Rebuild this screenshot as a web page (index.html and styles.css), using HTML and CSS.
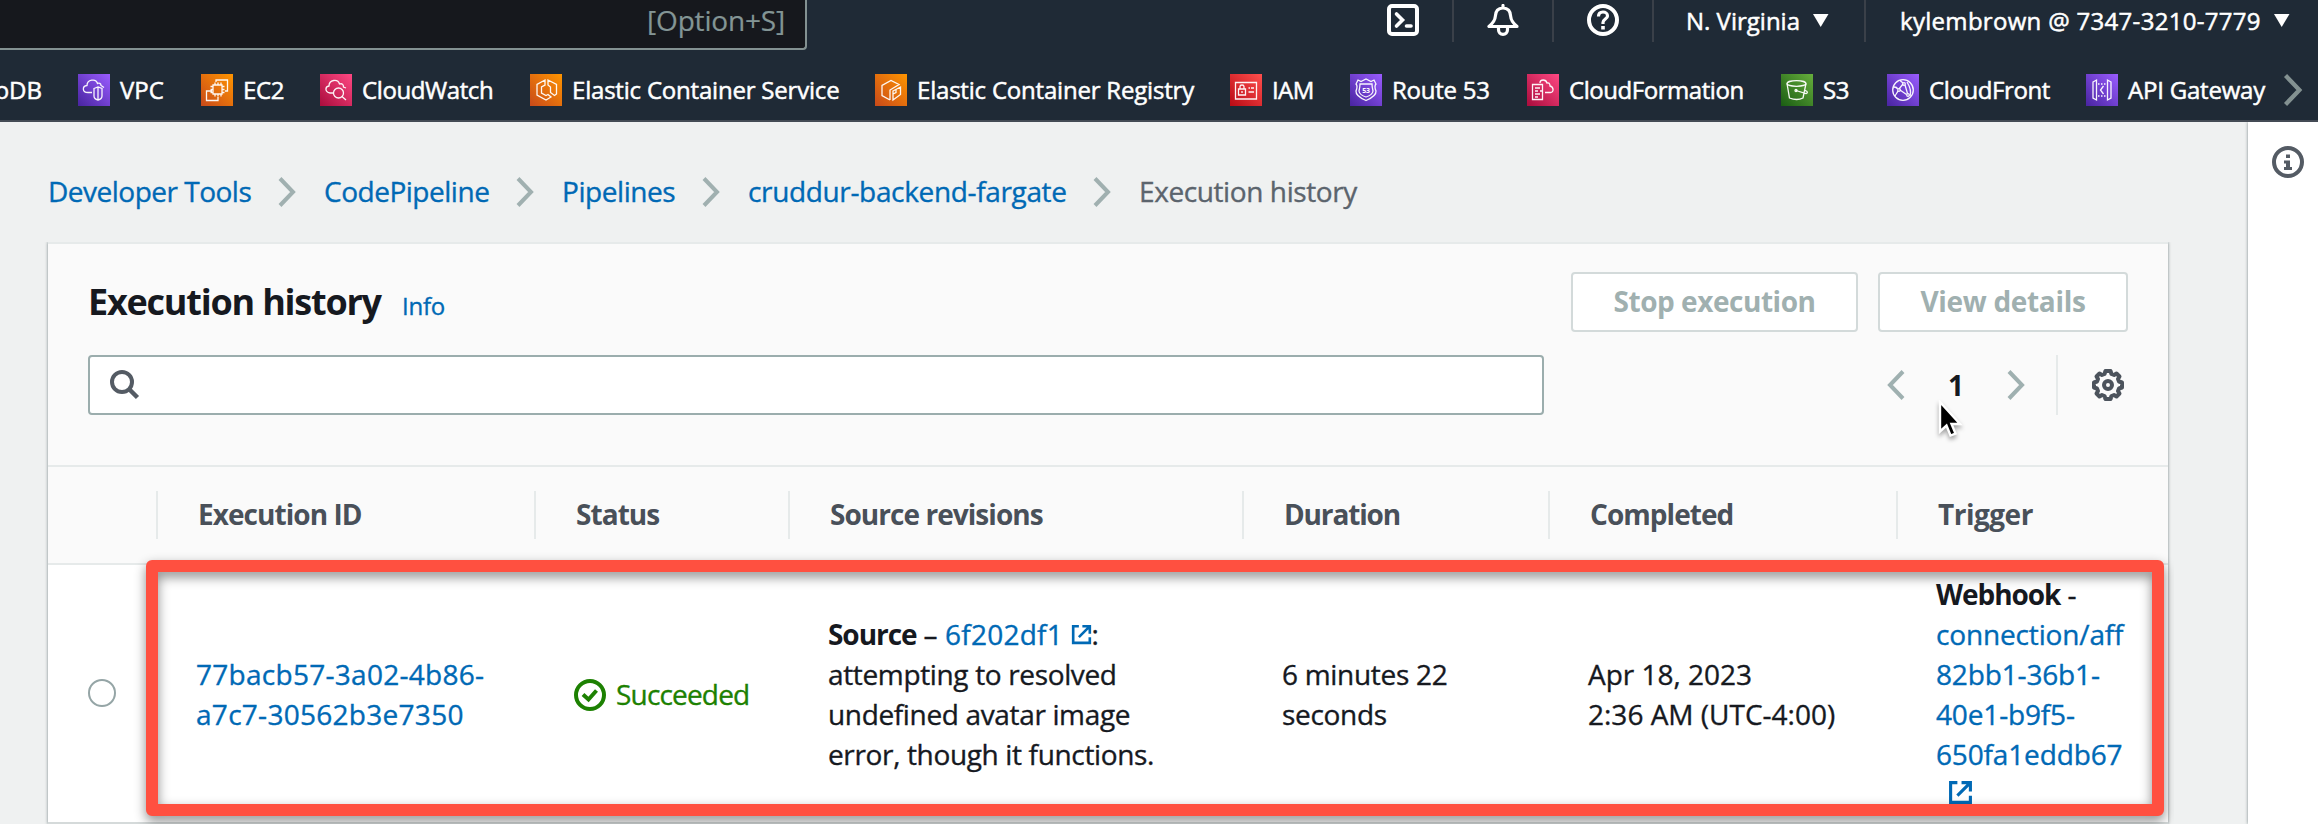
FILE: index.html
```html
<!DOCTYPE html>
<html lang="en">
<head>
<meta charset="utf-8">
<title>Execution history</title>
<link rel="stylesheet" href="styles.css">
</head>
<body>
<svg class="defs" width="0" height="0">
  <defs>
    <linearGradient id="purple" x1="0" y1="1" x2="1" y2="0"><stop offset="0" stop-color="#4824a0"/><stop offset="1" stop-color="#9a5cff"/></linearGradient>
    <linearGradient id="orange" x1="0" y1="1" x2="1" y2="0"><stop offset="0" stop-color="#c8491a"/><stop offset="1" stop-color="#ff9500"/></linearGradient>
    <linearGradient id="pink" x1="0" y1="1" x2="1" y2="0"><stop offset="0" stop-color="#a90c3c"/><stop offset="1" stop-color="#ff4883"/></linearGradient>
    <linearGradient id="red" x1="0" y1="1" x2="1" y2="0"><stop offset="0" stop-color="#b90a14"/><stop offset="1" stop-color="#ff4f4d"/></linearGradient>
    <linearGradient id="green" x1="0" y1="1" x2="1" y2="0"><stop offset="0" stop-color="#1a5c13"/><stop offset="1" stop-color="#66ae3c"/></linearGradient>
    <symbol id="chevron" viewBox="0 0 18 30"><path d="M2 1.500 15 15 2 28.500" fill="none" stroke="currentColor" stroke-width="4"/></symbol>
    <symbol id="external" viewBox="0 0 24 24"><path d="M9 2.500H2.500V21.500H21.500V15M13 2.500H21.500V11M21 3 9 15" fill="none" stroke="currentColor" stroke-width="3"/></symbol>
  </defs>
</svg>
<header class="nav">
  <div class="topbar">
    <div class="search-box"><span>[Option+S]</span></div>
    <div class="tool"><svg width="32" height="32" viewBox="0 0 32 32"><rect x="2" y="2" width="28" height="28" rx="3" fill="none" stroke="#fff" stroke-width="4"/><path d="M9.500 10 15.500 16 9.500 22" fill="none" stroke="#fff" stroke-width="3.600" stroke-linecap="round"/><path d="M19.500 22H24" stroke="#fff" stroke-width="3.600" stroke-linecap="round"/></svg></div>
    <div class="tool"><svg width="32" height="32" viewBox="0 0 32 32" fill="none" stroke="#fff" stroke-width="3.200" stroke-linejoin="round" stroke-linecap="round"><path d="M16 1.500V4M16 4C10.500 4 8.500 8 8.300 12.500 8.100 16.500 6 19 2 22.500H30C26 19 23.900 16.500 23.700 12.500 23.500 8 21.500 4 16 4Z"/><path d="M11.500 23V25.500C11.500 28.500 13.500 30.300 16 30.300S20.500 28.500 20.500 25.500V23"/></svg></div>
    <div class="tool"><svg width="32" height="32" viewBox="0 0 32 32" fill="none" stroke="#fff"><circle cx="16" cy="16" r="14" stroke-width="4"/><path d="M11.500 12.500C11.500 9.500 13.500 8 16 8S20.500 9.600 20.500 12C20.500 15 16 15.200 16 18.500V20" stroke-width="3.200"/><path d="M16 22V25.500" stroke-width="3.600"/></svg></div>
    <div class="menu region"><span>N. Virginia</span><svg width="16" height="13"><path d="M0 0H15.500L7.700 13Z" fill="#fff"/></svg></div>
    <div class="menu account"><span>kylembrown @ 7347-3210-7779</span><svg width="16" height="13"><path d="M0 0H15.500L7.700 13Z" fill="#fff"/></svg></div>
  </div>
  <nav class="favorites">
    <div class="fav cut"><span>oDB</span></div>
    <div class="fav f1"><svg viewBox="0 0 32 32"><path d="M0 0H32V32H0Z" fill="url(#purple)"/><path d="M14 18.500H10C4 18.500 4 12 9 11.500 9 5.500 18 4 19.500 9.500 21 8.500 23 9.500 23 11.500L26 13.500M16 14.500 20 13 24 14.500V22Q24 25 20 26 16 25 16 22ZM20 13V26"/></svg><span>VPC</span></div>
    <div class="fav f2"><svg viewBox="0 0 32 32"><path d="M0 0H32V32H0Z" fill="url(#orange)"/><path d="M12 11H21V20H12ZM14 8.500V11M17 8.500V11M20 8.500V11M14 20V22.500M17 20V22.500M20 20V22.500M9.500 12.500H12M9.500 15.500H12M9.500 18.500H12M21 12.500H23.500M21 15.500H23.500M21 18.500H23.500M15 8V6H26.500V17H24M11 17H5.500V26.500H17V23"/></svg><span>EC2</span></div>
    <div class="fav f3"><svg viewBox="0 0 32 32"><path d="M0 0H32V32H0Z" fill="url(#pink)"/><path d="M13 19H10C4.500 18 5 12.500 9 12 9 5.500 18 4.500 19.500 10 22.500 9 23.500 11 23.500 13L26 14M22 22.500 26 26"/><circle cx="18.500" cy="19" r="5"/></svg><span>CloudWatch</span></div>
    <div class="fav f4"><svg viewBox="0 0 32 32"><path d="M0 0H32V32H0Z" fill="url(#orange)"/><path d="M15 6 7 10.500V21L16 26 21 23 18 20.500 16 21.500 11.500 19V13L15 11ZM18 6 26.500 10.500V20L24.500 21.500 20.500 18.500V13L18 11Z"/></svg><span>Elastic Container Service</span></div>
    <div class="fav f5"><svg viewBox="0 0 32 32"><path d="M0 0H32V32H0Z" fill="url(#orange)"/><path d="M15 26 7 21.500V11.500L16 6.500 24 10.500 15 16V26M18 17 25.500 13V20.500L18 26ZM18 17V26M21 15.500V18.500L18 20"/></svg><span>Elastic Container Registry</span></div>
    <div class="fav f6"><svg viewBox="0 0 32 32"><path d="M0 0H32V32H0Z" fill="url(#red)"/><path d="M5.500 8.500H26.500V25H5.500ZM8.500 15H15.500V21H8.500ZM10 15V12.500Q10 11 12 11T14 12.500V15M18.500 14H20M21 14H24M18.500 18H24M12 17V19"/></svg><span>IAM</span></div>
    <div class="fav f7"><svg viewBox="0 0 32 32"><path d="M0 0H32V32H0Z" fill="url(#purple)"/><path d="M8 6 11 7.500 16 5 21 7.500 24 6 26 10Q24 12 26 17 26.500 22 16 26.500 5.500 22 6 17 8 12 6 10ZM10 10H22Q22 13 23 17 22.500 21 16 23 9.500 21 9 17 10 13 10 10Z"/><text x="16" y="19" text-anchor="middle">53</text></svg><span>Route 53</span></div>
    <div class="fav f8"><svg viewBox="0 0 32 32"><path d="M0 0H32V32H0Z" fill="url(#pink)"/><path d="M5.500 10.500H15.500V25.500H5.500ZM8 14H13M8 17H11M13 17H15M8 20H13M8 23H11M13 9C13 5 19 5 20 9 23 8.500 23 11 23 12 27 13 27 18.500 23.500 18.500H18"/></svg><span>CloudFormation</span></div>
    <div class="fav f9"><svg viewBox="0 0 32 32"><path d="M0 0H32V32H0Z" fill="url(#green)"/><path d="M6 9.500 8.500 24Q16 27 22 24L25 9.500M15 16.500 25 19.500Q27 19 26 17.500L23.500 16"/><ellipse cx="15.500" cy="9.500" rx="9.500" ry="2.800"/><circle cx="15" cy="16.500" r="1"/></svg><span>S3</span></div>
    <div class="fav f10"><svg viewBox="0 0 32 32"><path d="M0 0H32V32H0Z" fill="url(#purple)"/><circle cx="16" cy="16" r="10.300"/><path d="M8 22C9 20 10 19 11 17M12 15 16 10M18 11 20.500 19.500M13 16 19.500 20.500M13 6.500 16 9M23 22Q25 16 20 8M7 13Q10 13 10.500 15"/><circle cx="17" cy="10" r="1.300"/><circle cx="12" cy="16" r="1.300"/><circle cx="21" cy="21" r="1.300"/></svg><span>CloudFront</span></div>
    <div class="fav f11"><svg viewBox="0 0 32 32"><path d="M0 0H32V32H0Z" fill="url(#purple)"/><path d="M7 8 10.500 6V26L7 24ZM25 8 21.500 6V26L25 24ZM17.500 12 14.500 16 17.500 20"/><path d="M12 10H21M12 22H21" stroke-dasharray="1.500 1.500"/></svg><span>API Gateway</span></div>
    <svg class="next" width="20" height="32" viewBox="0 0 18 30"><use href="#chevron"/></svg>
  </nav>
</header>
<div class="page">
  <main class="main">
    <nav class="breadcrumb">
      <a class="b1">Developer Tools</a><svg><use href="#chevron"/></svg>
      <a class="b2">CodePipeline</a><svg><use href="#chevron"/></svg>
      <a class="b3">Pipelines</a><svg><use href="#chevron"/></svg>
      <a class="b4">cruddur-backend-fargate</a><svg><use href="#chevron"/></svg>
      <span>Execution history</span>
    </nav>
    <section class="card">
      <div class="card-head">
        <div class="title-row">
          <h1>Execution history</h1><a class="info">Info</a>
          <div class="buttons"><button class="stop" disabled>Stop execution</button><button class="view" disabled>View details</button></div>
        </div>
        <div class="filter-row">
          <div class="filter"><svg width="30" height="30" viewBox="0 0 30 30" fill="none" stroke="#545b64"><circle cx="12" cy="12" r="10" stroke-width="4"/><path d="M19 19 27.500 27.500" stroke-width="4.500"/></svg></div>
          <div class="pager">
            <svg class="prev" width="18" height="30"><use href="#chevron"/></svg>
            <b>1</b>
            <svg width="18" height="30"><use href="#chevron"/></svg>
          </div>
          <div class="settings"><svg width="32" height="32" viewBox="0 0 32 32" fill="none" stroke="#4c535c" stroke-width="4" stroke-linejoin="round"><path d="M13.500 2H18.500L19.500 5 22 6 24.500 4.500 27.500 7.500 26 10 27 12.500 30 13.500V18.500L27 19.500 26 22 27.500 24.500 24.500 27.500 22 26 19.500 27 18.500 30H13.500L12.500 27 10 26 7.500 27.500 4.500 24.500 6 22 5 19.500 2 18.500V13.500L5 12.500 6 10 4.500 7.500 7.500 4.500 10 6 12.500 5Z"/><circle cx="16" cy="16" r="4"/></svg></div>
          <svg class="cursor" width="34" height="46" viewBox="0 0 34 46"><path d="M3 2V31.500L9.500 25.500 13.500 35.500 18.500 33.500 14.500 24H23Z" fill="#000" stroke="#fff" stroke-width="2.400"/></svg>
        </div>
      </div>
      <div class="grid thead">
        <div></div><div class="h1">Execution ID</div><div class="h2">Status</div><div class="h3">Source revisions</div><div class="h4">Duration</div><div class="h5">Completed</div><div class="h6">Trigger</div>
      </div>
      <div class="grid row">
        <div class="pick"><i class="radio"></i></div>
        <div><a class="hash">77bacb57-3a02-4b86-<br>a7c7-30562b3e7350</a></div>
        <div class="status"><svg width="32" height="32" viewBox="0 0 32 32" fill="none" stroke="#1d8102" stroke-width="4"><circle cx="16" cy="16" r="14"/><path d="M9 15.500 14.500 20.500 22.500 11.500"/></svg><span>Succeeded</span></div>
        <div><p class="msg"><b>Source</b> – <a class="commit">6f202df1 <svg width="21" height="21"><use href="#external"/></svg></a>:<br>attempting to resolved<br>undefined avatar image<br>error, though it functions.</p></div>
        <div><p class="dur">6 minutes 22<br>seconds</p></div>
        <div><p class="date">Apr 18, 2023<br>2:36 AM (UTC-4:00)</p></div>
        <div><p class="trigger"><b>Webhook</b> -<br><a>connection/aff<br>82bb1-36b1-<br>40e1-b9f5-<br>650fa1eddb67<br><svg width="25" height="25"><use href="#external"/></svg></a></p></div>
        <div class="highlight"></div>
      </div>
    </section>
  </main>
  <aside class="help-panel"><svg width="32" height="32" viewBox="0 0 32 32" fill="none" stroke="#545b64"><circle cx="16" cy="16" r="14" stroke-width="4"/><path d="M14 8.500H18V12H14ZM12 14.500H18V21H20V24H12V21H14V17.500H12Z" fill="#545b64" stroke="none"/></svg></aside>
</div>
</body>
</html>
```
FILE: styles.css
```css
* { box-sizing: border-box; margin: 0; padding: 0; }
body {
  width: 2318px; height: 824px; overflow: hidden;
  background: #eff1f1; color: #16191f;
  font: 28px/40px "Open Sans", "Noto Sans", sans-serif;
  -webkit-text-stroke: .35px currentColor;
}
.defs { position: absolute; }
svg { display: block; flex: none; }
a { color: #0069b5; }
b, h1, button, .thead { -webkit-text-stroke-width: 0; }

.nav { height: 122px; background: #1f2a36; border-bottom: 2px solid #444b55; color: #fff; font-size: 24px; font-weight: 500; -webkit-text-stroke-width: .5px; }
.topbar { display: flex; height: 50px; }
.search-box {
  width: 807px; height: 50px; margin-right: 547px; padding: 0 20px 9px 0;
  display: flex; align-items: center; justify-content: flex-end;
  background: #16181d; border: solid #839191; border-width: 0 2px 2px 0; border-radius: 0 0 4px 0;
  color: #839595; font-size: 28px; font-weight: 400; letter-spacing: -.17px; -webkit-text-stroke-width: .2px;
}
.tool { width: 100px; height: 42px; padding: 4px 0 0 33px; border-right: 2px solid #3a4049; }
.menu { display: flex; align-items: center; height: 42px; padding: 0 0 1px 32px; gap: 13px; }
.menu svg { position: relative; top: -.5px; }
.region { width: 212px; border-right: 2px solid #3a4049; }
.account { padding-left: 34px; letter-spacing: .3px; }

.favorites {
  display: grid; height: 70px; padding-top: 24px;
  grid-template-columns: 78px 123px 119px 210px 345px 355px 120px 177px 254px 106px 199px 196px auto;
}
.fav { display: flex; align-items: center; gap: 10px; height: 32px; white-space: nowrap; }
.fav svg { width: 32px; height: 32px; fill: none; stroke: #fff; stroke-width: 1.3; stroke-opacity: .95; }
.fav svg path:first-child { stroke: none; }
.fav text { font: 700 7px "Open Sans", sans-serif; fill: #fff; stroke: none; }
.cut { width: 42px; justify-content: flex-end; }
.f2 { letter-spacing: -.3px; }
.f3 { letter-spacing: -.4px; }
.f4, .f5 { letter-spacing: -.2px; }
.f6 { letter-spacing: -.6px; }
.f7 { letter-spacing: -.25px; }
.f8 { letter-spacing: -.45px; }
.f9, .f10 { letter-spacing: -.4px; }
.f11 { letter-spacing: -.21px; }
.next { color: #839191; margin-left: 1px; }

.page { display: flex; height: 702px; }
.main { width: 2248px; padding: 49px 0 0 48px; }
.breadcrumb { display: flex; align-items: center; height: 40px; }
.breadcrumb svg { position: relative; top: 1px; width: 18px; height: 30px; margin: 0 28px 0 26px; color: #a0b0b0; }
.breadcrumb span { color: #5b646d; letter-spacing: -.4px; }
.b1 { width: 204px; letter-spacing: -.5px; }
.b2 { width: 166px; letter-spacing: -.48px; }
.b3 { width: 114px; letter-spacing: -.44px; }
.b4 { width: 319px; letter-spacing: -.35px; }
.breadcrumb a { white-space: nowrap; }

.card { width: 2120px; margin-top: 31px; border-top: 2px solid #e6eaea; background: #fff; box-shadow: 0 0 3px rgba(0, 28, 36, .5); clip-path: inset(0 -6px 0 -6px); }
.card-head { height: 223px; padding: 28px 40px 0; background: #fafafa; border-bottom: 2px solid #e6eaea; }
.title-row { display: flex; height: 60px; align-items: center; }
h1 { font-size: 36px; line-height: 58px; letter-spacing: -1.22px; width: 314px; white-space: nowrap; }
.info { font-size: 24px; padding-top: 8px; letter-spacing: -.23px; }
.buttons { display: flex; gap: 20px; margin-left: auto; }
button { height: 60px; padding-bottom: 2px; border: 2px solid #d3dada; border-radius: 4px; background: #fff; color: #a0b0b0; font: 700 28px "Open Sans", sans-serif; }
.stop { width: 287px; letter-spacing: -.46px; }
.view { width: 250px; letter-spacing: -.32px; }
.filter-row { position: relative; display: flex; margin-top: 23px; height: 60px; }
.filter { width: 1456px; border: 2px solid #9badad; border-radius: 4px; background: #fff; padding: 13px 20px; }
.pager { display: flex; align-items: center; margin-left: 343px; width: 170px; height: 60px; color: #9fb0b0; }
.pager b { width: 102px; text-align: center; color: #16191f; }
.prev { transform: scaleX(-1); }
.settings { width: 72px; margin-left: -1px; padding: 14px 0 0 34px; border-left: 2px solid #e6eaea; }
.cursor { position: absolute; left: 1849px; top: 45px; filter: drop-shadow(0 3px 2px rgba(0, 0, 0, .35)); }

.grid { display: grid; grid-template-columns: 110px 378px 254px 454px 306px 348px 270px; }
.thead { height: 98px; padding-top: 24px; background: #fafafa; border-bottom: 2px solid #e6eaea; font-weight: 700; color: #495059; }
.thead > div { height: 48px; margin-left: -2px; line-height: 46px; padding-left: 40px; border-left: 2px solid #e6eaea; }
.thead > div:first-child { border: 0; }
.thead .h1, .thead .h2, .thead .h3, .thead .h5 { letter-spacing: -.95px; }
.thead .h4 { letter-spacing: -1.15px; }
.thead .h6 { letter-spacing: -.5px; }
.row { position: relative; height: 259px; border-bottom: 2px solid #d5dada; }
.row > div { display: flex; align-items: center; height: 262px; padding: 0 0 4px 38px; white-space: nowrap; }
.row > .pick { padding: 0 0 6px 40px; }
.radio { width: 28px; height: 28px; border: 2px solid #95a5a6; border-radius: 50%; }
.hash { letter-spacing: .28px; }
.status { gap: 10px; color: #1d8102; letter-spacing: -.82px; }
.row > .status svg { position: relative; top: 1px; }
.row p svg { display: inline-block; }
.msg { letter-spacing: -.35px; }
.row b { letter-spacing: -1.05px; }
.commit { letter-spacing: .25px; margin-left: 1px; }
.dur { letter-spacing: -.3px; }
.trigger { letter-spacing: -.15px; }
.trigger svg { margin-left: 12px; }
.row > .highlight {
  position: absolute; left: 98px; top: -5px; width: 2018px; height: 256px;
  border: 12px solid #ff5040; border-radius: 6px; filter: drop-shadow(0 5px 6px rgba(0, 0, 0, .45));
}

.help-panel { width: 70px; padding: 24px 0 0 24px; background: #fff; box-shadow: 0 0 3px rgba(0, 28, 36, .5); clip-path: inset(0 0 0 -6px); }
```
